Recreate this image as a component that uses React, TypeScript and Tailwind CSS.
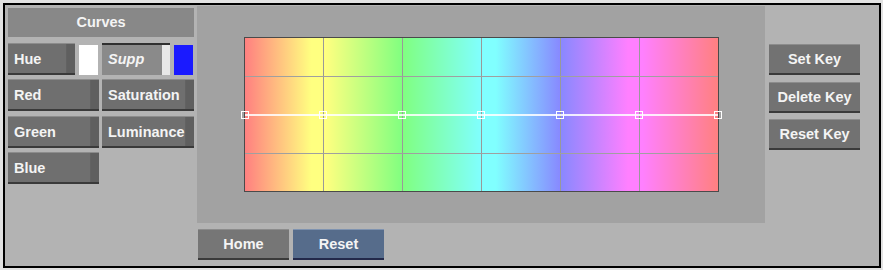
const font = "font-['Liberation_Sans',Arial,sans-serif]";

function SideButton({ label, w }: { label: string; w: string }) {
  return (
    <div
      className={`${w} flex h-[32px] border-t border-t-[#8c8c8c] border-b-2 border-b-[#3a3a3a] bg-[#6f6f6f]`}
    >
      <div className="flex flex-1 items-center pl-[6px] pt-[2px] text-[14.5px] font-bold text-[#f4f4f4]">
        {label}
      </div>
      <div className="w-[9px] border-l border-l-[#626262] bg-[#5f5f5f]" />
    </div>
  );
}

function KeyButton({ label }: { label: string }) {
  return (
    <div className="flex h-[31px] w-[91px] items-center justify-center border-t border-t-[#8c8c8c] border-b-2 border-b-[#3a3a3a] bg-[#727272] pt-[2px] text-[14.5px] font-bold text-[#f4f4f4]">
      {label}
    </div>
  );
}

const stops = [0, 1, 2, 3, 4, 5, 6];

function Graph() {
  return (
    <div className="relative h-[155px] w-[475px] border border-[#4a4a4a] bg-[linear-gradient(to_right,#ff8080_0%,#ffff80_14%,#ffff80_17%,#80ff80_33.3%,#80ffff_50%,#80ffff_53%,#8888ff_66.7%,#ff80ff_81%,#ff80ff_84%,#ff8080_100%)]">
      {/* grid lines */}
      {[1, 2, 3, 4, 5].map((c) => (
        <div
          key={"v" + c}
          className="absolute bottom-0 top-0 w-px bg-[#999999]"
          style={{ left: `${(c / 6) * 100}%` }}
        />
      ))}
      {[1, 3].map((r) => (
        <div
          key={"h" + r}
          className="absolute left-0 right-0 h-px bg-[#a0a0a0]"
          style={{ top: `${(r / 4) * 100}%` }}
        />
      ))}
      {/* curve */}
      <div className="absolute left-0 right-0 top-[76px] h-[2px] bg-white/85" />
      {stops.map((s) => (
        <div
          key={s}
          className="absolute top-[73px] h-[8px] w-[8px] -translate-x-1/2 border border-white"
          style={{ left: `${(s / 6) * 100}%` }}
        />
      ))}
    </div>
  );
}

export default function App() {
  return (
    <div className={`h-[270px] w-[883px] bg-[#e2e2e2] pb-[2px] pl-[3px] pr-[2px] pt-[3px] ${font}`}>
      <div className="flex h-full border-2 border-black bg-[#b3b3b3]">
        {/* left column */}
        <div className="ml-[3px] w-[186px]">
          <div className="mt-[3px] flex h-[29px] items-center justify-center bg-[#888888] pt-[1px] text-[14.5px] font-bold text-[#f4f4f4]">
            Curves
          </div>
          <div className="mt-[6px] flex items-start">
            <SideButton label="Hue" w="w-[67px]" />
            <div className="ml-[4px] mt-[2px] h-[30px] w-[19px] bg-white" />
            <div className="ml-[4px] flex h-[32px] w-[68px] border-t-2 border-t-[#303030] bg-[#8a8a8a]">
              <div className="flex flex-1 items-center pl-[6px] text-[14.5px] font-bold italic text-[#f4f4f4]">
                Supp
              </div>
              <div className="w-[8px] bg-[#e8e8e8]" />
            </div>
            <div className="ml-[4px] mt-[2px] h-[30px] w-[19px] bg-[#1a1aff]" />
          </div>
          <div className="mt-[4px] flex gap-[3px]">
            <SideButton label="Red" w="w-[91px]" />
            <SideButton label="Saturation" w="w-[92px]" />
          </div>
          <div className="mt-[5px] flex gap-[3px]">
            <SideButton label="Green" w="w-[91px]" />
            <SideButton label="Luminance" w="w-[92px]" />
          </div>
          <div className="mt-[4px] flex">
            <SideButton label="Blue" w="w-[91px]" />
          </div>
        </div>

        {/* graph panel */}
        <div className="ml-[3px] w-[568px]">
          <div className="mt-[1px] flex h-[217px] items-center justify-center bg-[#a2a2a2]">
            <Graph />
          </div>
          <div className="ml-[1px] mt-[6px] flex gap-[4px]">
            <div className="flex h-[31px] w-[91px] items-center justify-center border-t border-t-[#8c8c8c] border-b-2 border-b-[#3a3a3a] bg-[#767676] pt-[2px] text-[14.5px] font-bold text-[#f4f4f4]">
              Home
            </div>
            <div className="flex h-[31px] w-[91px] items-center justify-center border-t border-t-[#7f93b0] border-b-2 border-b-[#23294a] bg-[#566c8b] pt-[2px] text-[14.5px] font-bold text-[#f4f4f4]">
              Reset
            </div>
          </div>
        </div>

        {/* key buttons */}
        <div className="ml-[4px] mt-[39px] flex flex-col gap-[6.5px]">
          <KeyButton label="Set Key" />
          <KeyButton label="Delete Key" />
          <KeyButton label="Reset Key" />
        </div>
      </div>
    </div>
  );
}
